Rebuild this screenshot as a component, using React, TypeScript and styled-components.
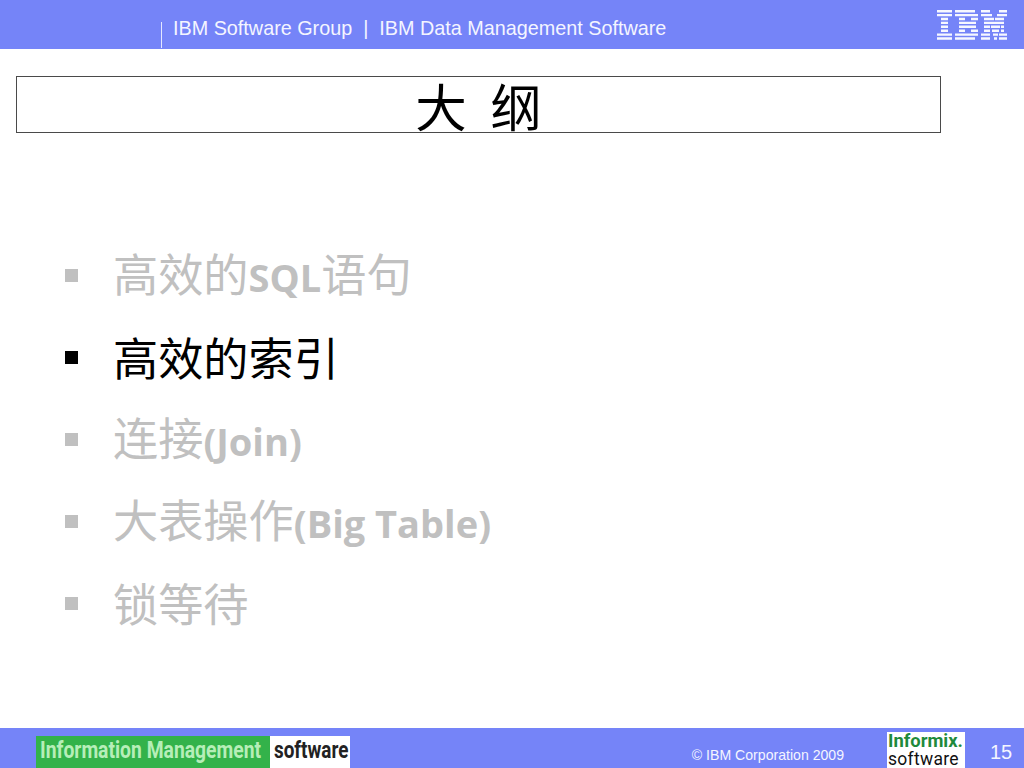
import React from "react";
import styled, { createGlobalStyle } from "styled-components";

const Global = createGlobalStyle`
  html, body { margin: 0; padding: 0; background: #fff; }
  #root { width: 1024px; height: 768px; overflow: hidden; }
`;

const Page = styled.div`
  width: 1024px;
  height: 768px;
  display: flex;
  flex-direction: column;
  background: #fff;
  font-family: "Liberation Sans", Arial, sans-serif;
`;

const Header = styled.header`
  height: 49px;
  background: #7584f8;
  display: flex;
  align-items: flex-start;
  padding-left: 161px;
  padding-right: 17px;
  color: #f4f5ff;
  font-size: 19.8px;
`;

const Rule = styled.span`
  width: 1px;
  height: 26px;
  margin-top: 22px;
  background: #e4e7ff;
`;

const Crumbs = styled.div`
  margin-left: 11px;
  margin-top: 17px;
  line-height: 23px;
  white-space: pre;
  flex: 1;
`;

const LogoSvg = styled.svg`
  margin-top: 10px;
  display: block;
`;

const TitleBox = styled.div`
  margin: 27px 0 0 16px;
  width: 923px;
  height: 55px;
  border: 1px solid #4a4a4a;
  display: flex;
  align-items: center;
  justify-content: center;
  font-family: "Noto Sans CJK SC", sans-serif;
  font-size: 51.5px;
  font-weight: 400;
  word-spacing: 12px;
  color: #000;
  white-space: pre;
  line-height: 55px;
`;

const List = styled.ul`
  list-style: none;
  margin: 101px 0 0 65px;
  padding: 0;
  flex: 1;
`;

const Item = styled.li<{ $active?: boolean }>`
  height: 82px;
  display: flex;
  align-items: center;
  color: ${(p) => (p.$active ? "#000" : "#c0c0c0")};
`;

const Bullet = styled.span<{ $active?: boolean }>`
  width: 13px;
  height: 13px;
  background: ${(p) => (p.$active ? "#000" : "#c0c0c0")};
  margin-right: 35px;
  flex: none;
`;

const ItemText = styled.span`
  font-family: "Noto Sans CJK SC", sans-serif;
  font-size: 45.2px;
  line-height: 60px;
  white-space: pre;
`;

const Latin = styled.b`
  font-family: "Open Sans", "Liberation Sans", sans-serif;
  font-weight: 700;
  font-size: 38px;
`;

const Footer = styled.footer`
  height: 40px;
  background: #7584f8;
  display: flex;
  align-items: flex-start;
  padding-left: 36px;
`;

const Brand = styled.div`
  margin-top: 8px;
  height: 32px;
  display: flex;
`;

const BrandGreen = styled.div`
  width: 234px;
  background: #33b24a;
  color: #b6eeb8;
  font: 700 23px/30px "Roboto", sans-serif;
  overflow: hidden;
  white-space: nowrap;
  padding-left: 4px;
  box-sizing: border-box;
`;

const Squeezed = styled.span<{ $ratio: number }>`
  display: inline-block;
  transform: scaleX(${(p) => p.$ratio});
  transform-origin: left center;
`;

const BrandWhite = styled.div`
  width: 80px;
  background: #fff;
  color: #222;
  font: 700 23px/30px "Roboto", sans-serif;
  overflow: hidden;
  white-space: nowrap;
  padding-left: 4px;
  box-sizing: border-box;
`;

const Copyright = styled.div`
  margin-left: auto;
  margin-top: 19px;
  font-size: 14.1px;
  line-height: 16px;
  color: #f4f5ff;
  white-space: nowrap;
`;

const Informix = styled.div`
  margin-left: 43px;
  margin-top: 4px;
  width: 78px;
  height: 36px;
  background: #fff;
  display: flex;
  flex-direction: column;
  padding-left: 1px;
  box-sizing: border-box;
`;

const InformixTop = styled.div`
  font: 700 18.4px/18px "Roboto", sans-serif;
  color: #1f8a3c;
  white-space: nowrap;
`;

const InformixBottom = styled.div`
  font: 400 17.5px/18px "Roboto", sans-serif;
  letter-spacing: 0.3px;
  color: #111;
  white-space: nowrap;
`;

const PageNo = styled.div`
  width: 59px;
  margin-top: 13px;
  padding-left: 25px;
  box-sizing: border-box;
  font-size: 20px;
  line-height: 22px;
  color: #f4f5ff;
`;

const IbmLogo = () => (
  <LogoSvg width="71" height="30" viewBox="0 0 71 30">
    <g fill="#f6f7ff">
      <path d="M1 0h15v2.4H1zM19 0h20v2.4H19zM45 0h9v2.4h-9zM63 0h8v2.4h-8z" />
      <path d="M1 3.9h15v2.4H1zM19 3.9h23v2.4H19zM45 3.9h11v2.4H45zM61 3.9h10v2.4H61z" />
      <path d="M5 7.8h7v2.4H5zM23 7.8h6v2.4h-6zM35 7.8h7v2.4h-7zM48 7.8h10v2.4H48zM59 7.8h9v2.4h-9z" />
      <path d="M5 11.7h7v2.4H5zM23 11.7h17v2.4H23zM48 11.7h20v2.4H48z" />
      <path d="M5 15.6h7v2.4H5zM23 15.6h17v2.4H23zM48 15.6h6v2.4h-6zM55 15.6h9v2.4h-9zM65 15.6h3v2.4h-3z" />
      <path d="M5 19.5h7v2.4H5zM23 19.5h6v2.4h-6zM35 19.5h7v2.4h-7zM48 19.5h6v2.4h-6zM56 19.5h7v2.4h-7zM65 19.5h3v2.4h-3z" />
      <path d="M1 23.4h15v2.4H1zM19 23.4h23v2.4H19zM45 23.4h9v2.4h-9zM57 23.4h5v2.4h-5zM63 23.4h8v2.4h-8z" />
      <path d="M1 27.3h15v2.4H1zM19 27.3h20v2.4H19zM45 27.3h9v2.4h-9zM58 27.3h3v2.4h-3zM63 27.3h8v2.4h-8z" />
    </g>
  </LogoSvg>
);

export default function App() {
  return (
    <Page>
      <Global />
      <Header>
        <Rule />
        <Crumbs>IBM Software Group  |  IBM Data Management Software</Crumbs>
        <IbmLogo />
      </Header>
      <TitleBox>大 纲</TitleBox>
      <List>
        <Item>
          <Bullet />
          <ItemText>高效的<Latin>SQL</Latin>语句</ItemText>
        </Item>
        <Item $active>
          <Bullet $active />
          <ItemText>高效的索引</ItemText>
        </Item>
        <Item>
          <Bullet />
          <ItemText>连接<Latin>(Join)</Latin></ItemText>
        </Item>
        <Item>
          <Bullet />
          <ItemText>大表操作<Latin>(Big Table)</Latin></ItemText>
        </Item>
        <Item>
          <Bullet />
          <ItemText>锁等待</ItemText>
        </Item>
      </List>
      <Footer>
        <Brand>
          <BrandGreen><Squeezed $ratio={0.84}>Information Management</Squeezed></BrandGreen>
          <BrandWhite><Squeezed $ratio={0.82}>software</Squeezed></BrandWhite>
        </Brand>
        <Copyright>© IBM Corporation 2009</Copyright>
        <Informix>
          <InformixTop>Informix.</InformixTop>
          <InformixBottom>software</InformixBottom>
        </Informix>
        <PageNo>15</PageNo>
      </Footer>
    </Page>
  );
}
